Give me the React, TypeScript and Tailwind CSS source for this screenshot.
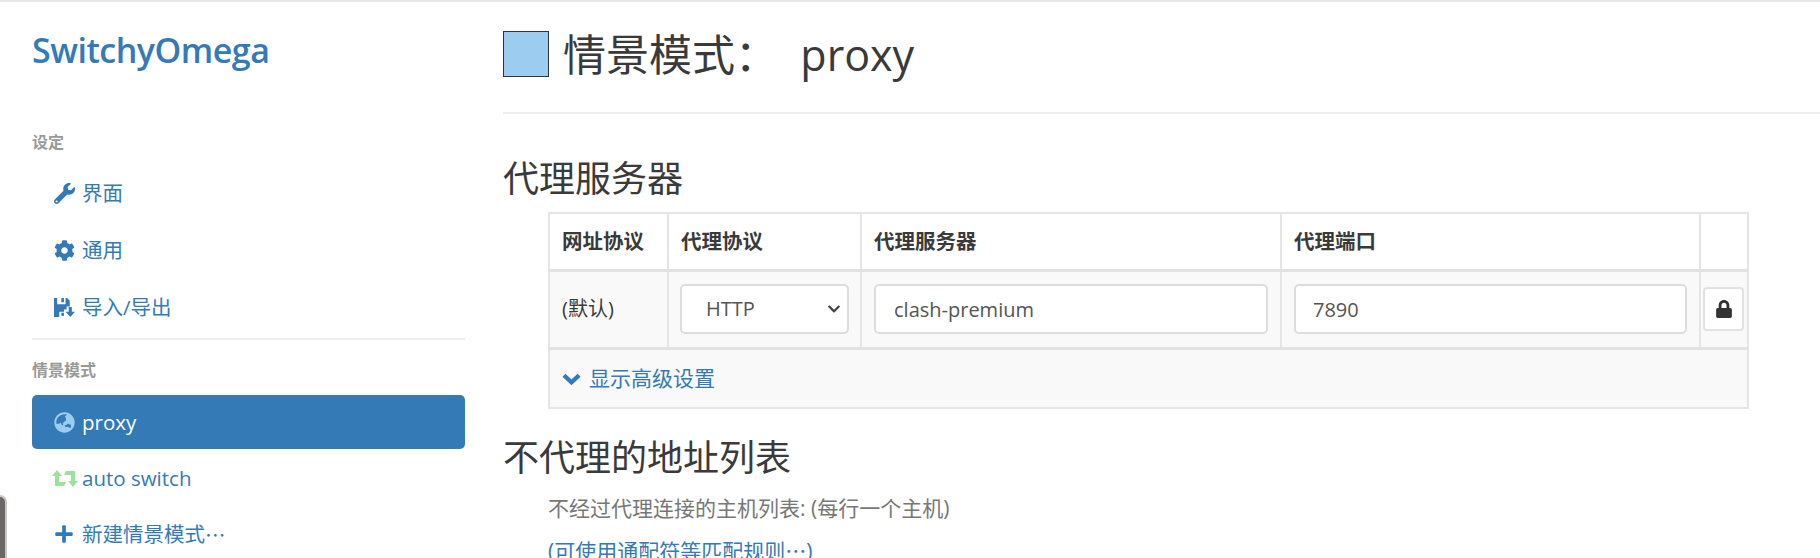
import React from "react";
import { FaWrench, FaCog, FaPlus, FaGlobeAsia, FaChevronDown, FaLock } from "react-icons/fa";

const SANS = "font-['Open_Sans','Noto_Sans_CJK_SC',sans-serif]";

function FloppySave({ className }: { className?: string }) {
  return (
    <svg viewBox="0 0 20 20" className={className} fill="currentColor">
      <path d="M0 1h3v6h8V1h1.500L15 3.500V9h-3v3H9.500v2H5v5H0z" />
      <path d="M7 1h2.500v4H7z" />
      <path d="M7 15h2.500v3H7z" />
      <path d="M14 9.500h3V14h3l-4.500 5L11 14h3z" />
    </svg>
  );
}

function Retweet({ className }: { className?: string }) {
  return (
    <svg viewBox="0 0 26 17" className={className} fill="currentColor">
      <path d="M5 0l5 6H7v6h7l-2 4H3V6H0z" />
      <path d="M14 1h9v10h3l-5 6-5-6h3V5h-7z" />
    </svg>
  );
}

function ChevronThick({ className }: { className?: string }) {
  return (
    <svg viewBox="0 0 20 14" className={className} fill="none" stroke="currentColor" strokeWidth="4.500" strokeLinejoin="miter">
      <path d="M2 3l8 7.500L18 3" />
    </svg>
  );
}

function NavItem({ icon, label, active }: { icon: React.ReactNode; label: React.ReactNode; active?: boolean }) {
  return (
    <a
      className={`flex h-[54px] items-center rounded-[5px] pl-[22px] text-[20.5px] ${
        active ? "bg-[#337ab7] text-white" : "text-[#337ab7]"
      }`}
    >
      <span className="flex w-[28px] shrink-0 items-center">{icon}</span>
      {label}
    </a>
  );
}

export default function App() {
  return (
    <div lang="zh-CN" className={`${SANS} relative flex h-[558px] w-[1820px] overflow-hidden border-t-2 border-[#e8e8e8] bg-white`}>
      <aside className="w-[503px] shrink-0 pl-[32px] pr-[38px]">
        <h1 className="mt-[24px] h-[48px] text-[34px] leading-[48px] font-semibold tracking-[-0.5px] text-[#337ab7]">SwitchyOmega</h1>
        <h4 className="mt-[58px] h-[20px] text-[16px] leading-[20px] font-bold text-[#999]">设定</h4>
        <nav className="mt-[14px] flex flex-col gap-[3px]">
          <NavItem icon={<FaWrench className="size-[21px]" />} label="界面" />
          <NavItem icon={<FaCog className="size-[21px]" />} label="通用" />
          <NavItem icon={<FloppySave className="size-[21px]" />} label="导入/导出" />
        </nav>
        <div className="mt-[4px] h-[2px] bg-[#eeeeee]" />
        <h4 className="mt-[20px] h-[20px] text-[16px] leading-[20px] font-bold text-[#999]">情景模式</h4>
        <nav className="mt-[15px] flex flex-col gap-[2px]">
          <NavItem icon={<FaGlobeAsia className="size-[21px] text-[#9ccdf1]" />} label="proxy" active />
          <NavItem icon={<Retweet className="-ml-[2px] h-[17px] w-[26px] text-[#9ce29c]" />} label="auto switch" />
          <NavItem
            icon={<FaPlus className="size-[20px]" />}
            label={
              <>
                新建情景模式<span className="font-['Noto_Sans_CJK_SC',sans-serif]">⋯</span>
              </>
            }
          />
        </nav>
      </aside>

      <main className="min-w-0 flex-1 text-[#3a3a3a]">
        <div className="flex h-[112px] items-start border-b-2 border-[#eeeeee] pt-[29px]">
          <span className="size-[46px] shrink-0 border-[1.5px] border-[#333] bg-[#9ccdf1]" />
          <h2 className="ml-[14px] mt-[1px] h-[46px] whitespace-pre text-[43px] leading-[46px]">情景模式：  proxy</h2>
        </div>
        <h3 className="mt-[40px] h-[50px] text-[36px] leading-[50px]">代理服务器</h3>
        <div className="ml-[45px] mt-[8px] w-[1199px]">
          <table className="w-full table-fixed border-collapse border-2 border-[#e5e5e5] text-[20px]">
            <colgroup>
              <col className="w-[119px]" />
              <col className="w-[193px]" />
              <col className="w-[420px]" />
              <col className="w-[419px]" />
              <col className="w-[48px]" />
            </colgroup>
            <thead>
              <tr className="h-[57px] border-b-[3px] border-[#e2e2e2]">
                {["网址协议", "代理协议", "代理服务器", "代理端口", ""].map((h, i) => (
                  <th key={i} className="border-x-2 border-[#e5e5e5] pl-[12px] text-left text-[20.5px] font-bold">
                    {h}
                  </th>
                ))}
              </tr>
            </thead>
            <tbody>
              <tr className="h-[78px] border-b-[3px] border-[#e2e2e2] bg-[#f9f9f9]">
                <td className="border-x-2 border-[#e5e5e5] pl-[12px]">(默认)</td>
                <td className="border-x-2 border-[#e5e5e5] pl-[11px]">
                  <div className="flex h-[50px] w-[169px] items-center justify-between rounded-[5px] border-2 border-[#dddddd] bg-white pl-[24px] pr-[6px] text-[#555]">
                    HTTP
                    <FaChevronDown className="size-[14px] text-[#444]" />
                  </div>
                </td>
                <td className="border-x-2 border-[#e5e5e5] pl-[12px]">
                  <input readOnly value="clash-premium" className="h-[50px] w-[394px] rounded-[5px] border-2 border-[#dddddd] bg-white pl-[18px] text-[#555] outline-none" />
                </td>
                <td className="border-x-2 border-[#e5e5e5] pl-[12px]">
                  <input readOnly value="7890" className="h-[50px] w-[393px] rounded-[5px] border-2 border-[#dddddd] bg-white pl-[17px] text-[#555] outline-none" />
                </td>
                <td className="border-x-2 border-[#e5e5e5] pl-[2px]">
                  <button className="flex h-[44px] w-[41px] items-center justify-center rounded-[4px] border-2 border-[#e2e2e2] bg-white text-[#333]">
                    <FaLock className="size-[18px]" />
                  </button>
                </td>
              </tr>
              <tr className="h-[60px] bg-[#f9f9f9]">
                <td colSpan={5} className="pl-[12px]">
                  <a className="mt-[1px] flex items-center gap-[8px] text-[21px] text-[#337ab7]">
                    <ChevronThick className="h-[14px] w-[19px]" />
                    显示高级设置
                  </a>
                </td>
              </tr>
            </tbody>
          </table>
        </div>
        <h3 className="mt-[24px] h-[50px] text-[36px] leading-[50px]">不代理的地址列表</h3>
        <p className="ml-[45px] mt-[11px] h-[28px] text-[21px] leading-[28px] text-[#777]">不经过代理连接的主机列表: (每行一个主机)</p>
        <a className="ml-[45px] mt-[14px] block h-[28px] text-[21px] leading-[28px] text-[#337ab7]">
          (可使用通配符等匹配规则<span className="font-['Noto_Sans_CJK_SC',sans-serif]">⋯</span>)
        </a>
      </main>

      <div className="absolute bottom-0 left-0 h-[63px] w-[7px] rounded-tr-[8px] border-r-2 border-t-2 border-[#c8c8c8] bg-[#6b6766]" />
    </div>
  );
}
